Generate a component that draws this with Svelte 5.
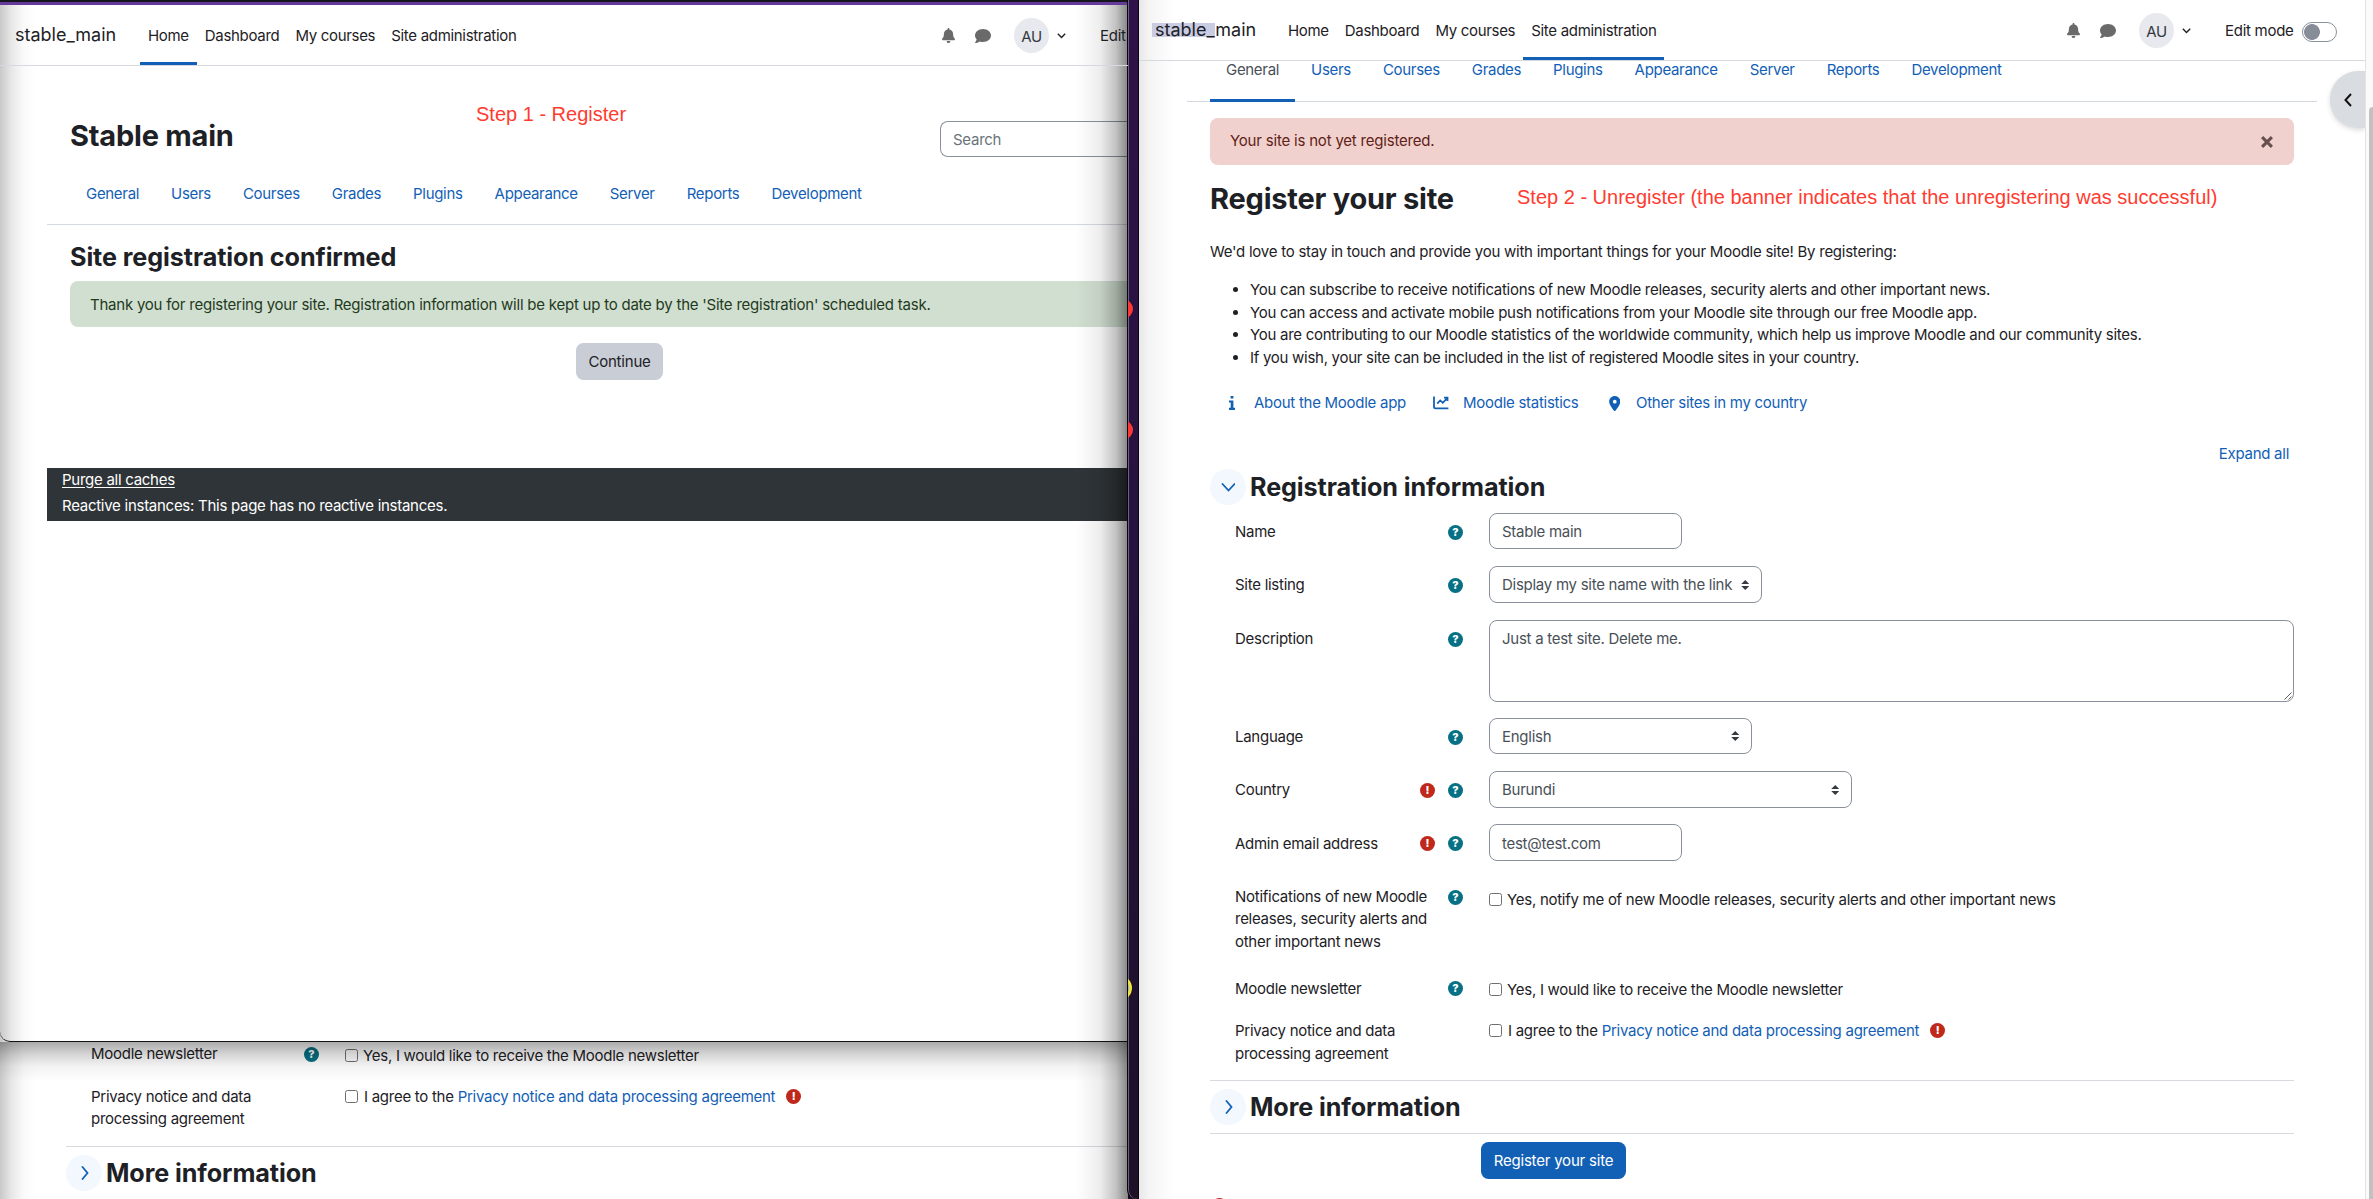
<script>
  const navItems = ['Home', 'Dashboard', 'My courses', 'Site administration']
  const tabs = ['General', 'Users', 'Courses', 'Grades', 'Plugins', 'Appearance', 'Server', 'Reports', 'Development']

  const benefits = [
    'You can subscribe to receive notifications of new Moodle releases, security alerts and other important news.',
    'You can access and activate mobile push notifications from your Moodle site through our free Moodle app.',
    'You are contributing to our Moodle statistics of the worldwide community, which help us improve Moodle and our community sites.',
    'If you wish, your site can be included in the list of registered Moodle sites in your country.'
  ]

  // type decides the control, size is the css class that sets its width
  const fields = [
    { label: 'Name', type: 'text', value: 'Stable main', size: 'short' },
    { label: 'Site listing', type: 'select', value: 'Display my site name with the link', size: 'listing' },
    { label: 'Description', type: 'textarea', value: 'Just a test site. Delete me.', size: 'full' },
    { label: 'Language', type: 'select', value: 'English', size: 'language' },
    { label: 'Country', type: 'select', value: 'Burundi', size: 'country', required: true },
    { label: 'Admin email address', type: 'text', value: 'test@test.com', size: 'short', required: true }
  ]
</script>

{#snippet help()}
  <span class="badge help">?</span>
{/snippet}

{#snippet required()}
  <span class="badge required">!</span>
{/snippet}

{#snippet navbar(active, selected)}
  <nav class="navbar">
    <div class="brand">{#if selected}<mark>stable_</mark>main{:else}stable_main{/if}</div>
    <ul class="primary">
      {#each navItems as item}
        <li class:active={item === active}>{item}</li>
      {/each}
    </ul>
    <div class="usernav">
      <svg class="bell" viewBox="0 0 448 512"><path d="M224 0c-17.7 0-32 14.3-32 32V51.2C119 66 64 130.6 64 208v18.8c0 47-17.3 92.4-48.5 127.6l-7.4 8.3c-8.4 9.4-10.4 22.9-5.3 34.4S19.4 416 32 416H416c12.6 0 24-7.4 29.2-18.9s3.1-25-5.3-34.4l-7.4-8.3C401.3 319.2 384 273.9 384 226.8V208c0-77.4-55-142-128-156.8V32c0-17.7-14.3-32-32-32zm45.3 493.3c12-12 18.7-28.3 18.7-45.3H224 160c0 17 6.7 33.3 18.7 45.3s28.3 18.7 45.3 18.7s33.3-6.7 45.3-18.7z" /></svg>
      <svg class="comment" viewBox="0 0 512 448"><path d="M512 208c0 115-115 208-256 208c-37 0-72-6-104-18c-30 22-80 50-136 50c-14 0-21-17-11-27c14-15 42-50 47-92C19 294 0 253 0 208C0 93 115 0 256 0s256 93 256 208z" /></svg>
      <span class="avatar">AU</span>
      <svg class="caret" viewBox="0 0 9 6"><path d="M.8.8l3.7 3.8L8.2.8" /></svg>
      <span class="editmode">Edit mode</span>
      <span class="switch"></span>
    </div>
  </nav>
{/snippet}

{#snippet tabbar(active)}
  <ul class="tabs">
    {#each tabs as tab}
      <li class:active={tab === active}>{tab}</li>
    {/each}
  </ul>
{/snippet}

{#snippet consent()}
  <div class="row newsletter">
    <div class="label"><span>Moodle newsletter</span>{@render help()}</div>
    <div class="check"><i class="box"></i>Yes, I would like to receive the Moodle newsletter</div>
  </div>
  <div class="row privacy">
    <div class="label"><span>Privacy notice and data processing agreement</span></div>
    <div class="check">
      <i class="box"></i>I agree to the&nbsp;<a href="#policy">Privacy notice and data processing agreement</a>{@render required()}
    </div>
  </div>
  <div class="section collapsed">
    <span class="toggle"><svg viewBox="0 0 14 14"><path d="M5.5 1l5 6-5 6" /></svg></span>
    <h3>More information</h3>
  </div>
{/snippet}

<div class="desktop">
  <div class="window behind">
    <div class="form">{@render consent()}</div>
  </div>

  <div class="window confirm">
    {@render navbar('Home', false)}
    <div class="page">
      <header>
        <h1>Stable main</h1>
        <div class="search">Search</div>
      </header>
      {@render tabbar('')}
      <div class="content">
        <h2>Site registration confirmed</h2>
        <div class="alert success">Thank you for registering your site. Registration information will be kept up to date by the 'Site registration' scheduled task.</div>
        <button class="btn secondary">Continue</button>
      </div>
      <footer>
        <u>Purge all caches</u>
        <span>Reactive instances: This page has no reactive instances.</span>
      </footer>
    </div>
  </div>
  <div class="shade-bottom"></div>
  <div class="shade-left"></div>
  <div class="shade-right"></div>

  <div class="strip">
    <i class="dot first"></i>
    <i class="dot second"></i>
    <i class="dot third"></i>
  </div>

  <div class="window register">
    {@render navbar('Site administration', true)}
    <div class="page">
      {@render tabbar('General')}
      <div class="content">
        <div class="alert danger">
          Your site is not yet registered.
          <svg viewBox="0 0 12 12"><path d="M1.8 1.8l8.4 8.4M10.2 1.8l-8.4 8.4" /></svg>
        </div>
        <h1>Register your site</h1>
        <p>We'd love to stay in touch and provide you with important things for your Moodle site! By registering:</p>
        <ul class="benefits">
          {#each benefits as benefit}
            <li>{benefit}</li>
          {/each}
        </ul>
        <div class="links">
          <svg class="info" viewBox="0 0 6 14"><path d="M1.6 0h2.8v2.6H1.6zM0 4.4h4.4v7.4H6V14H0v-2.2h1.7V6.5H0z" /></svg>
          <a href="#app">About the Moodle app</a>
          <svg class="chart" viewBox="0 0 16 14"><path d="M1 .5v10.2q0 1.6 1.6 1.6H15.4M4.2 7.6l3-3.2 2.6 2.4 4.4-4.6M11 1.7h3.5v3.4" /></svg>
          <a href="#stats">Moodle statistics</a>
          <svg class="pin" viewBox="0 0 384 512"><path d="M215.7 499.2C267 435 384 279.4 384 192C384 86 298 0 192 0S0 86 0 192c0 87.4 117 243 168.3 307.2c12.3 15.3 35.1 15.3 47.4 0zM192 128a64 64 0 1 1 0 128 64 64 0 1 1 0-128z" /></svg>
          <a href="#sites">Other sites in my country</a>
        </div>
        <div class="expand"><a href="#expand">Expand all</a></div>

        <div class="form">
          <div class="section opened">
            <span class="toggle"><svg viewBox="0 0 14 14"><path d="M1.5 4l6 6.5 6-6.5" /></svg></span>
            <h3>Registration information</h3>
          </div>
          {#each fields as field}
            <div class="row">
              <div class="label">
                <span>{field.label}</span>
                {#if field.required}{@render required()}{/if}
                {@render help()}
              </div>
              <div class="control {field.type} {field.size}">
                {field.value}
                {#if field.type === 'select'}
                  <svg class="arrows" viewBox="0 0 8 10"><path d="M4 0l4 4H0zM4 10L0 6h8z" /></svg>
                {:else if field.type === 'textarea'}
                  <svg class="grip" viewBox="0 0 8 8"><path d="M.5 7.5l7-7M4.5 7.5l3-3" /></svg>
                {/if}
              </div>
            </div>
          {/each}
          <div class="row notify">
            <div class="label"><span>Notifications of new Moodle releases, security alerts and other important news</span>{@render help()}</div>
            <div class="check"><i class="box"></i>Yes, notify me of new Moodle releases, security alerts and other important news</div>
          </div>
          {@render consent()}
          <button class="btn primary-btn">Register your site</button>
          <div class="legend"><i></i></div>
        </div>
      </div>
    </div>
    <span class="drawer"><svg viewBox="0 0 8 14"><path d="M7 1L1.5 7 7 13" /></svg></span>
    <span class="scrollbar"><i></i></span>
  </div>

  <div class="note step1">Step 1 - Register</div>
  <div class="note step2">Step 2 - Unregister (the banner indicates that the unregistering was successful)</div>
</div>

<style>
  :global(body) {
    background: #fff;
    overflow: hidden;
  }

  .desktop {
    position: relative;
    width: 2373px;
    height: 1199px;
    overflow: hidden;
    background: #160d20;
    color: #1d2125;
    font: 400 15px/22.5px Inter, "Liberation Sans", sans-serif;
    letter-spacing: -0.27px;
    white-space: nowrap;
  }

  .desktop :global(*) {
    box-sizing: border-box;
  }

  a {
    color: #1260b6;
    text-decoration: none;
  }

  ul, h1, h2, h3, p {
    margin: 0;
    padding: 0;
  }

  ul {
    list-style: none;
  }

  h1 {
    font-size: 29px;
    line-height: 34px;
    font-weight: 700;
    letter-spacing: -0.22px;
  }

  h2, h3 {
    font-size: 25.2px;
    line-height: 30px;
    font-weight: 700;
    letter-spacing: -0.1px;
  }

  /* windows */
  .window {
    position: absolute;
    background: #fff;
    overflow: hidden;
  }

  .behind {
    left: 0;
    top: 1000px;
    width: 1128px;
    height: 199px;
    padding: 35px 0 0 66px;
  }

  .confirm {
    left: 0;
    top: 5px;
    width: 1128px;
    height: 1037px;
    border-bottom: 1px solid #141418;
    border-bottom-left-radius: 10px;
    box-shadow: 0 -3px 0 #63399a, 0 -5px 0 1px #17151c;
  }

  .register {
    left: 1139px;
    top: 0;
    width: 1234px;
    height: 1199px;
    background: linear-gradient(90deg, #e8e8e8, #f4f4f4 10px, #fff 36px);
  }

  .shade-bottom,
  .shade-left,
  .shade-right {
    position: absolute;
    pointer-events: none;
  }

  .shade-bottom {
    left: 0;
    top: 1042px;
    width: 1128px;
    height: 40px;
    background: linear-gradient(rgba(0, 0, 0, .33), rgba(0, 0, 0, .17) 12px, rgba(0, 0, 0, .05) 24px, transparent);
  }

  .shade-left {
    left: 0;
    top: 5px;
    width: 36px;
    height: 1194px;
    background: linear-gradient(90deg, rgba(0, 0, 0, .21), rgba(0, 0, 0, .09) 12px, rgba(0, 0, 0, .02) 24px, transparent);
  }

  .shade-right {
    left: 1076px;
    top: 5px;
    width: 52px;
    height: 1194px;
    background: linear-gradient(270deg, rgba(0, 0, 0, .48), rgba(0, 0, 0, .24) 12px, rgba(0, 0, 0, .07) 28px, transparent);
  }

  .strip {
    position: absolute;
    left: 1127px;
    top: 0;
    width: 12px;
    height: 1199px;
    overflow: hidden;
    background: linear-gradient(#2e1249, #25123d 50%, #1d1027);
    border: solid #08060c;
    border-width: 0 1px;
    border-bottom-left-radius: 9px;
    box-shadow: inset 1px 0 #6d6280;
  }

  .dot {
    position: absolute;
    left: -12px;
    width: 17px;
    height: 18px;
    border-radius: 50%;
    background: #fb3b33;
  }

  .first {
    top: 300px;
  }

  .second {
    top: 421px;
  }

  .third {
    top: 976px;
    left: -19px;
    width: 23px;
    height: 24px;
    background: #7fb8d8;
    border: 3px solid #f2e13a;
  }

  /* navbar */
  .navbar {
    position: relative;
    z-index: 2;
    display: flex;
    align-items: center;
    height: 61px;
    padding: 0 0 0 15px;
    border-bottom: 1px solid #d6dadf;
  }

  .register .navbar {
    padding: 0 36px 0 16px;
    background: linear-gradient(90deg, #e8e8e8, #f4f4f4 10px, #fff 36px);
  }

  .brand {
    width: 125px;
    padding-top: 1px;
    font-size: 18px;
    letter-spacing: 0;
  }

  .brand mark {
    margin-left: -3px;
    padding-left: 3px;
    color: inherit;
    background: linear-gradient(#c9cce3, #c9cce3) 0 4px / 100% 14px no-repeat;
  }

  .primary {
    display: flex;
    height: 60px;
    letter-spacing: -0.31px;
  }

  .primary li {
    padding: 20px 8px 0;
    border-bottom: 3px solid transparent;
  }

  .primary .active {
    border-color: #1260b6;
  }

  .usernav {
    display: flex;
    align-items: center;
    flex: none;
    margin-left: auto;
    padding-top: 1px;
  }

  .usernav svg,
  .usernav span {
    flex: none;
  }

  .usernav svg {
    fill: #6a6a6b;
  }

  .bell {
    width: 13px;
    height: 15px;
  }

  .comment {
    width: 16px;
    height: 14px;
    margin: 0 23px 0 20px;
  }

  .avatar {
    width: 35px;
    height: 35px;
    border-radius: 50%;
    background: #e7e9ee;
    color: #343a40;
    line-height: 37px;
    text-align: center;
  }

  .usernav .caret {
    width: 9px;
    height: 6px;
    margin: 1px 34px 0 8px;
    fill: none;
    stroke: #1d2125;
    stroke-width: 1.4;
  }

  .editmode {
    width: 77px;
    padding-top: 1px;
  }

  .confirm .usernav {
    width: 186px;
    overflow: hidden;
  }

  .switch {
    width: 35px;
    height: 20px;
    margin-top: 2px;
    border: 1px solid #8a919c;
    border-radius: 10px;
    background: radial-gradient(circle at 9px 9px, #868d98 7.5px, transparent 8.3px);
  }

  /* tabs */
  .tabs {
    display: flex;
    height: 61px;
    padding-left: 23px;
    border-bottom: 1px solid #d5dae0;
    color: #1260b6;
    letter-spacing: -0.31px;
  }

  .tabs li {
    height: 61px;
    padding: 18px 16px 0;
    border-bottom: 3px solid transparent;
  }

  .tabs .active {
    color: #495057;
    border-color: #1260b6;
  }

  /* left window */
  .confirm .page {
    margin-left: 47px;
  }

  .confirm .tabs li {
    padding-top: 19px;
  }

  .confirm header {
    display: flex;
    justify-content: space-between;
    height: 98px;
    padding: 53px 0 0 23px;
  }

  .search {
    width: 188px;
    height: 36px;
    margin-top: 2px;
    padding: 7px 12px;
    border: 1px solid #8a909b;
    border-right: 0;
    border-radius: 8px 0 0 8px;
    color: #6a737b;
  }

  .confirm .content {
    height: 243px;
    padding: 17px 0 0 23px;
  }

  .alert {
    display: flex;
    align-items: center;
    justify-content: space-between;
    padding: 0 20px;
    border-radius: 8px;
  }

  .success {
    height: 46px;
    margin-top: 9px;
    padding-top: 2px;
    border-radius: 8px 0 0 8px;
    background: #d1dfd1;
    color: #1f3a20;
    letter-spacing: -0.23px;
  }

  .btn {
    display: block;
    height: 37px;
    padding: 1px 0 0;
    border: 0;
    border-radius: 7.5px;
    font: inherit;
    letter-spacing: -0.2px;
  }

  .secondary {
    width: 87px;
    margin: 16px 0 0 506px;
    background: #c9cdd6;
    color: #1d2125;
  }

  footer {
    display: flex;
    flex-direction: column;
    gap: 3.5px;
    height: 53px;
    padding: 1px 0 0 15px;
    background: #2f3438;
    color: #fff;
  }

  u {
    text-underline-offset: 1.5px;
  }

  /* right window */
  .register .page {
    width: 1130px;
    margin: -20px 0 0 48px;
  }

  .register .content {
    padding: 16px 23px 0;
  }

  .danger {
    height: 47px;
    background: #f1d1cd;
    color: #5f1e18;
    letter-spacing: -0.2px;
  }

  .danger svg {
    width: 14px;
    height: 14px;
    stroke: #65504f;
    stroke-width: 2.6;
  }

  .register h1 {
    margin-top: 16.5px;
  }

  .register p {
    margin-top: 25.3px;
    letter-spacing: -0.25px;
  }

  .benefits {
    margin: 16.2px 0 0 40px;
    list-style: disc;
    letter-spacing: -0.28px;
  }

  .links {
    display: flex;
    align-items: center;
    margin-top: 22.7px;
    padding-left: 19px;
  }

  .links svg {
    fill: #1260b6;
  }

  .info {
    width: 6px;
    height: 14px;
    margin-right: 19px;
  }

  .links .chart {
    width: 16px;
    height: 14px;
    margin: 0 14px 0 27px;
    fill: none;
    stroke: #1260b6;
    stroke-width: 1.8;
  }

  .pin {
    width: 11.5px;
    height: 15px;
    margin: 0 16px 0 30px;
  }

  .expand {
    margin: 28.5px 5px 3.8px 0;
    text-align: right;
  }

  /* form */
  .form {
    width: 1084px;
  }

  .section {
    display: flex;
    align-items: center;
    height: 36px;
    margin-bottom: 8px;
  }

  .opened {
    margin-bottom: 7.5px;
  }

  .opened h3 {
    padding-bottom: 1px;
  }

  .collapsed {
    height: 54px;
    margin: 0 0 8px;
    border: solid #d6dadf;
    border-width: 1px 0;
  }

  .toggle {
    display: flex;
    align-items: center;
    justify-content: center;
    width: 36px;
    height: 36px;
    margin-right: 4px;
    border-radius: 50%;
    background: #f2f8fd;
  }

  .toggle svg {
    width: 14px;
    height: 14px;
    fill: none;
    stroke: #1260b6;
    stroke-width: 1.8;
    stroke-linecap: round;
  }

  .row {
    display: grid;
    grid-template-columns: 254px 1fr;
    padding-left: 25px;
    margin-bottom: 16.9px;
  }

  .label {
    display: flex;
    align-items: flex-start;
    gap: 13px;
    padding: 8.1px 26px 0 0;
    white-space: normal;
  }

  .label span:first-child {
    flex: 1;
    max-width: 201px;
    margin-right: auto;
  }

  .badge {
    flex: none;
    width: 15px;
    height: 15px;
    margin-top: 3.9px;
    border-radius: 50%;
    color: #fff;
    font-size: 11px;
    font-weight: 800;
    line-height: 15px;
    text-align: center;
    letter-spacing: 0;
  }

  .help {
    background: #067184;
  }

  .required {
    background: #c1281c;
  }

  .control {
    position: relative;
    height: 36.5px;
    padding: 7.1px 12px 0;
    border: 1px solid #8a909b;
    border-radius: 8px;
    color: #495057;
  }

  .short {
    width: 193px;
  }

  .listing {
    width: 273px;
  }

  .language {
    width: 263px;
  }

  .country {
    width: 363px;
  }

  .control.textarea {
    height: 82px;
    width: 805px;
    margin-bottom: -1px;
  }

  .arrows {
    position: absolute;
    right: 12px;
    top: 12.5px;
    width: 8.5px;
    height: 10px;
    fill: #343a40;
  }

  .grip {
    position: absolute;
    right: 1px;
    bottom: 1px;
    width: 8px;
    height: 8px;
    stroke: #555;
    stroke-width: .9;
  }

  .check {
    display: flex;
    padding-top: 11.2px;
  }

  .notify {
    margin-bottom: 16px;
  }

  .newsletter {
    margin-bottom: 12px;
  }

  .newsletter .check {
    padding-top: 9.5px;
    height: 29.5px;
  }

  .privacy {
    margin-bottom: 15px;
  }

  .privacy .check {
    padding-top: 8px;
  }

  .box {
    width: 13px;
    height: 13px;
    margin: 4px 5px 0 0;
    border: 1px solid #6f6f6f;
    border-radius: 2.5px;
    background: #fff;
  }

  .privacy .box {
    margin-right: 6px;
  }

  .privacy .badge {
    margin: 3px 0 0 11px;
  }

  .primary-btn {
    width: 145px;
    margin-left: 271px;
    background: #1260b6;
    color: #fff;
  }

  .legend {
    padding: 18.5px 0 0 2px;
  }

  .legend i {
    display: block;
    width: 15px;
    height: 15px;
    border-radius: 50%;
    background: #c1281c;
  }

  .drawer {
    position: absolute;
    right: 8px;
    top: 71px;
    display: flex;
    align-items: center;
    width: 35px;
    height: 57px;
    padding-left: 14px;
    border-radius: 28px 0 0 28px;
    background: #d9dde1;
    box-shadow: 0 2px 5px rgba(0, 0, 0, .15);
  }

  .drawer svg {
    width: 8px;
    height: 14px;
    fill: none;
    stroke: #111;
    stroke-width: 2;
  }

  .scrollbar {
    position: absolute;
    z-index: 3;
    right: 0;
    top: 0;
    width: 8px;
    height: 1199px;
    border-left: 1px solid #e3e3e3;
    background: #fafafa;
  }

  .scrollbar i {
    position: absolute;
    right: 0;
    top: 107px;
    width: 4px;
    height: 1092px;
    border-radius: 4px 0 0 0;
    background: #c1c1c1;
  }

  /* annotations on top of the windows */
  .note {
    position: absolute;
    color: #ff3b30;
    font: 20px/24px "Liberation Sans", Arial, sans-serif;
    letter-spacing: 0;
  }

  .step1 {
    left: 476px;
    top: 102px;
  }

  .step2 {
    left: 1517px;
    top: 185px;
  }
</style>
